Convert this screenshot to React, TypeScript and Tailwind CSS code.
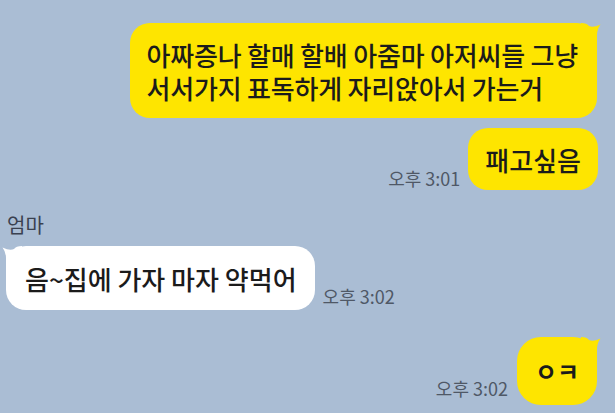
import React from "react";

const font = { fontFamily: '"Noto Sans CJK KR", "Noto Sans", sans-serif' };

function TailRight({ color }: { color: string }) {
  return (
    <svg className="absolute top-0 right-[-4px]" width="20" height="26" viewBox="0 0 20 26">
      <path d="M0 0 Q6 0 8 3 Q12 5 19.5 1.5 Q16 6 16 12 L16 26 L0 26 Z" fill={color} />
    </svg>
  );
}

function TailLeft({ color }: { color: string }) {
  return (
    <svg className="absolute top-0 left-[-4px]" width="20" height="26" viewBox="0 0 20 26">
      <path d="M20 0 Q14 0 12 3 Q8 5 0.5 1.5 Q4 6 4 12 L4 26 L20 26 Z" fill={color} />
    </svg>
  );
}

export default function App() {
  return (
    <div
      className="w-[615px] h-[413px] bg-[#aabdd4] overflow-hidden flex flex-col text-[#1b1b1b]"
      style={font}
    >
      <div className="mt-[23px] flex justify-end pr-[18px]">
        <div className="relative bg-[#fee500] rounded-[20px] pl-[17px] pr-[19px] h-[95px] flex flex-col justify-center text-[26px] leading-[33px] font-medium whitespace-nowrap tracking-[-0.2px]">
          <TailRight color="#fee500" />
          <p className="relative">
            아짜증나 할매 할배 아줌마 아저씨들 그냥
            <br />
            서서가지 표독하게 자리앉아서 가는거
          </p>
        </div>
      </div>

      <div className="mt-[10px] flex justify-end items-end gap-[8px] pr-[17px]">
        <div className="text-[18px] leading-[22px] text-[#4f5866] mb-[1px] whitespace-nowrap">오후 3:01</div>
        <div className="bg-[#fee500] rounded-[20px] h-[62px] px-[17px] flex items-center text-[26px] leading-[33px] font-medium whitespace-nowrap">
          패고싶음
        </div>
      </div>

      <div className="mt-[22px] pl-[7px] text-[20px] leading-[26px] text-[#3a4150]">엄마</div>

      <div className="mt-[8px] pl-[6px] flex items-end gap-[8px]">
        <div className="relative bg-white rounded-[20px] h-[64px] pl-[19px] pr-[18px] flex items-center text-[26px] leading-[33px] font-medium whitespace-nowrap">
          <TailLeft color="#ffffff" />
          <span className="relative">음~집에 가자 마자 약먹어</span>
        </div>
        <div className="text-[18px] leading-[22px] text-[#4f5866] mb-[3px] whitespace-nowrap">오후 3:02</div>
      </div>

      <div className="mt-[27px] flex justify-end items-end gap-[9px] pr-[18px]">
        <div className="text-[18px] leading-[22px] text-[#4f5866] mb-[6px] whitespace-nowrap">오후 3:02</div>
        <div className="relative bg-[#fee500] rounded-[24px] h-[68px] w-[80px] flex items-center justify-center text-[24px] leading-[28px] font-bold whitespace-nowrap">
          <TailRight color="#fee500" />
          <span className="relative">ㅇㅋ</span>
        </div>
      </div>
    </div>
  );
}
